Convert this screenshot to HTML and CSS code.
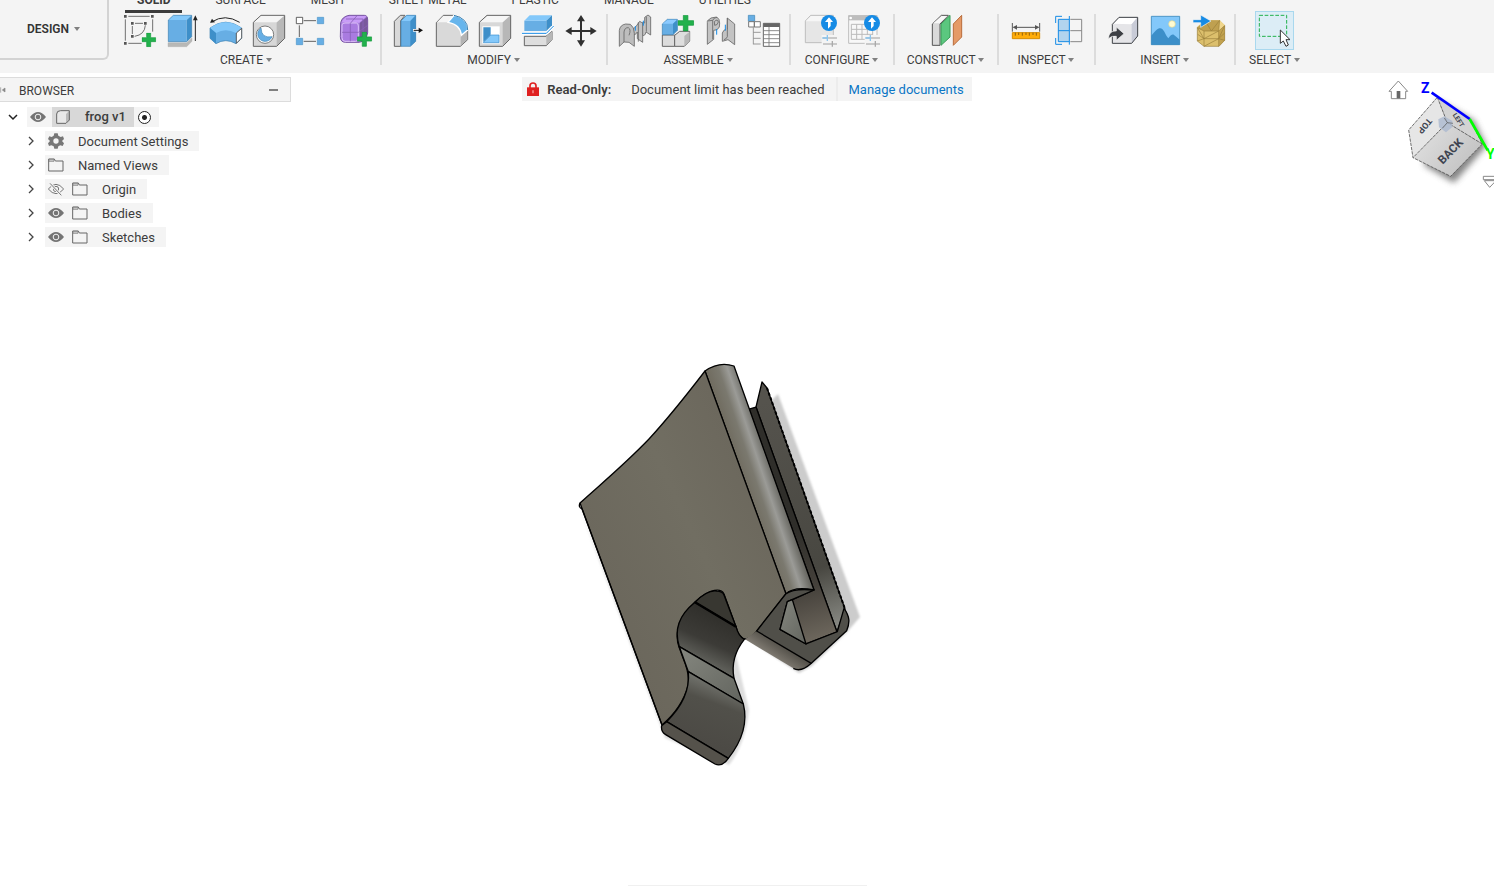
FILE: index.html
```html
<!DOCTYPE html>
<html lang="en">
<head>
<meta charset="utf-8">
<title>frog v1</title>
<link rel="stylesheet" href="styles.css">
</head>
<body>
<svg class="defs" aria-hidden="true">
  <symbol id="eye" viewBox="0 0 48 32"><path d="M0 16Q24-14 48 16Q24 46 0 16Z" fill="#747474"/><circle cx="24" cy="16" r="8.500" fill="none" stroke="#f4f4f4" stroke-width="3"/></symbol>
  <symbol id="eye-off" viewBox="0 0 48 40"><path d="M1 20Q24-8 47 20Q24 48 1 20Z" fill="none" stroke="#777" stroke-width="3"/><circle cx="24" cy="20" r="8" fill="none" stroke="#777" stroke-width="3"/><path d="M6 3L40 39" stroke="#f4f4f4" stroke-width="8"/><path d="M6 3L40 39" stroke="#777" stroke-width="3"/></symbol>
  <symbol id="folder" viewBox="0 0 48 42"><path d="M2 3H19L22 9H45V39H2Z" fill="#f4f4f4" stroke="#666" stroke-width="3"/><path d="M3 4H18V10H3Z" fill="#ccc" stroke="#777" stroke-width="2"/></symbol>
  <symbol id="right" viewBox="0 0 12 12"><path d="M4 2L8 6L4 10" fill="none" stroke="#444" stroke-width="1.300"/></symbol>
  <symbol id="down" viewBox="0 0 12 12"><path d="M2 4L6 8L10 4" fill="none" stroke="#222" stroke-width="1.500"/></symbol>
  <symbol id="plus" viewBox="0 0 44 44"><path d="M15 1H27V15H42V27H27V42H15V27H1V15H15Z" fill="#22b14c" stroke="#159c3e" stroke-width="2"/></symbol>
</svg>

<header class="header">
  <button class="workspace">DESIGN <i class="caret"></i></button>
  <div class="main-bar">
    <nav class="tabs">
      <a class="tab active" href="#">SOLID</a><a class="tab" href="#">SURFACE</a><a class="tab" href="#">MESH</a><a class="tab" href="#">SHEET METAL</a><a class="tab" href="#">PLASTIC</a><a class="tab" href="#">MANAGE</a><a class="tab" href="#">UTILITIES</a>
    </nav>
    <div class="ribbon">
      <section class="group">
        <div class="tools">
          <button class="tool" aria-label="Create sketch"><svg viewBox="357 33 117 117"><path d="M376 58V122M385 49H449M458 58V95M385 130H425" fill="none" stroke="#555" stroke-width="2.500"/><path d="M397 78V102M405 70H429M436 76Q434 104 404 109" fill="none" stroke="#555" stroke-width="2.500"/><path d="M372 45h8v8h-8zM453 45h8v8h-8zM372 126h8v8h-8zM393 66h8v8h-8zM432 66h8v8h-8zM393 105h8v8h-8z" fill="#555"/><use href="#plus" x="425" y="98" width="44" height="44"/></svg></button>
          <button class="tool" aria-label="Extrude"><svg viewBox="486 33 117 117"><path d="M504 128H560L576 114V124L560 140H504Z" fill="#b8b8b6" stroke="#aaa"/><path d="M505 60H560V125H505Z" fill="#67aee4"/><path d="M505 60L520 46H575L560 60Z" fill="#83c8fa"/><path d="M560 60L575 46V110L560 125Z" fill="#3e8fc9"/><path d="M505 60L520 46H575V110L560 125H505Z" fill="none" stroke="#397fb0" stroke-width="2"/><path d="M586 123V55" stroke="#222" stroke-width="3"/><path d="M586 46L593 61H579Z" fill="#222"/></svg></button>
          <button class="tool" aria-label="Revolve"><svg viewBox="615 33 117 117"><path d="M635 66Q675 40 719 67" fill="none" stroke="#222" stroke-width="3"/><path d="M630 68L636 56L645 67Z" fill="#222"/><path d="M630 84Q677 49 725 84V115L708 131Q677 113 648 131L630 115Z" fill="#67aee4" stroke="#397fb0" stroke-width="2"/><path d="M630 84Q677 49 725 84L708 99Q677 82 648 99Z" fill="#83c8fa"/><path d="M630 84L648 99V131L630 115Z" fill="#3e8fc9"/><path d="M709 99L725 85V114L709 130Z" fill="#fff" stroke="#444" stroke-width="2.500"/></svg></button>
          <button class="tool" aria-label="Hole"><svg viewBox="744 33 117 117"><path d="M760 67L783 46H854V115L830 139H760Z" fill="#d7d7d7"/><path d="M830 67L854 46V115L830 139Z" fill="#b8b8b8"/><path d="M760 67L783 46H854L830 67Z" fill="#f5f5f5"/><path d="M760 67L783 46H854V115L830 139H760Z" fill="none" stroke="#656565" stroke-width="3"/><circle cx="795" cy="104" r="26" fill="#fff" stroke="#666" stroke-width="2.500"/><path d="M783 84A22 22 0 1 0 816 110Q784 116 783 84Z" fill="#67aee4" stroke="#4388b7" stroke-width="2"/></svg></button>
          <button class="tool" aria-label="Pattern"><svg viewBox="3 33 117 117"><path d="M28 76V111M41 62H78M41 124H78" stroke="#444" stroke-width="2.500"/><path d="M19 52h19v19h-19z" fill="#fff" stroke="#444" stroke-width="2.500"/><path d="M82 52h19v19h-19zM19 115h19v19h-19zM82 115h19v19h-19z" fill="#67aee4" stroke="#4f96c9" stroke-width="2"/></svg></button>
          <button class="tool" aria-label="Create form"><svg viewBox="129 33 117 117"><path d="M149 68Q153 50 174 46H220Q230 46 230 60V99Q225 123 205 127H164Q148 127 148 110Z" fill="#ab80df" stroke="#7956a2" stroke-width="3"/><path d="M152 67Q160 49 178 48H227L205 68Z" fill="#c89bf7"/><path d="M206 69L229 50V96Q224 116 206 124Z" fill="#79599c"/><path d="M153 75Q153 69 162 69H196Q202 70 202 78V115Q202 124 194 124H162Q153 124 153 113Z" fill="#a97be0" stroke="#dcc1f8" stroke-width="3"/><path d="M178 70V124M153 97H202L230 76M178 70L198 47M165 57H216V112" fill="none" stroke="#8a62b8" stroke-width="2.500"/><use href="#plus" x="198" y="95" width="46" height="46"/></svg></button>
        </div>
        <button class="group-name">CREATE <i class="caret"></i></button>
      </section>
      <section class="group">
        <div class="tools">
          <button class="tool" aria-label="Press pull"><svg viewBox="294 33 117 117"><path d="M313 64L331 46H345L332 62V139H313Z" fill="#d9d9d9" stroke="#656565" stroke-width="3"/><path d="M333 63L350 46H377V124L361 139H333Z" fill="#67aee4"/><path d="M333 63L350 46H377L361 63Z" fill="#83c8fa"/><path d="M361 63L377 46V124L361 139Z" fill="#3e8fc9"/><path d="M333 63L350 46H377V124L361 139H333Z" fill="none" stroke="#397fb0" stroke-width="2"/><path d="M369 91H395" stroke="#fff" stroke-width="8"/><path d="M371 91H390" stroke="#111" stroke-width="3"/><path d="M386 83L399 91L386 99Z" fill="#111"/></svg></button>
          <button class="tool" aria-label="Fillet"><svg viewBox="423 33 117 117"><path d="M439 68L460 46H491Q532 54 533 91V119L511 139H439Z" fill="#d9d9d9" stroke="#656565" stroke-width="3"/><path d="M441 67L460 48H490L474 67Z" fill="#f5f5f5"/><path d="M512 104L532 90V118L512 137Z" fill="#b4b4b4"/><path d="M474 67L492 46Q534 55 533 90L514 106Q512 74 474 67Z" fill="#67b5ec" stroke="#fff" stroke-width="4"/><path d="M492 46Q534 55 533 90" fill="none" stroke="#397fb0" stroke-width="3"/></svg></button>
          <button class="tool" aria-label="Shell"><svg viewBox="552 33 117 117"><path d="M568 67L591 46H662V115L638 139H568Z" fill="#d8d8d8"/><path d="M638 67L662 46V115L638 139Z" fill="#b7b7b7"/><path d="M570 67L592 48H658L638 67Z" fill="#f6f6f6"/><path d="M568 67L591 46H662V115L638 139H568Z" fill="none" stroke="#656565" stroke-width="3"/><path d="M577 79H629V131H577Z" fill="#fff"/><path d="M580 82H602V105L580 127Z" fill="#3e8fc9"/><path d="M580 128L603 105H627V128Z" fill="#83c8fa" stroke="#398ed0" stroke-width="2"/></svg></button>
          <button class="tool" aria-label="Split body"><svg viewBox="681 33 117 117"><path d="M703 109H768L786 94V119L769 137H703Z" fill="#dedede" stroke="#656565" stroke-width="3"/><path d="M769 109L786 94V119L769 136Z" fill="#b7b7b7"/><path d="M703 62H769V93H703Z" fill="#67aee4"/><path d="M703 62L719 46H786L769 62Z" fill="#83c8fa"/><path d="M769 62L786 46V76L769 93Z" fill="#3e8fc9"/><path d="M696 100H769L791 78" fill="none" stroke="#fff" stroke-width="8"/><path d="M696 100H769L791 78" fill="none" stroke="#178be5" stroke-width="3"/></svg></button>
          <button class="tool" aria-label="Move"><svg viewBox="810 33 117 117"><path d="M873 55V130M836 93H910" stroke="#303030" stroke-width="6"/><path d="M873 45L885 64H861ZM873 140L885 121H861ZM826 93L845 81V105ZM920 93L901 81V105Z" fill="#303030"/></svg></button>
        </div>
        <button class="group-name">MODIFY <i class="caret"></i></button>
      </section>
      <section class="group">
        <div class="tools">
          <button class="tool" aria-label="Joint"><svg viewBox="42 33 117 117"><g stroke="#666" stroke-width="2.500" stroke-linejoin="round"><path d="M134 52L144 45L152 51V105L138 96Q134 111 126 105V72Q126 64 134 69Z" fill="#c3c3c3"/><path d="M109 78L119 64L128 69V127L112 116V96Q105 108 99 101V88Z" fill="#c3c3c3"/><path d="M58 91Q60 75 77 72L91 73Q103 81 103 100V139L87 127L72 126L58 139Z" fill="#bdbdbd"/><path d="M72 126V96Q74 82 85 83Q94 88 87 106" fill="none"/><path d="M115 67V125M139 50V95" fill="none"/></g><path d="M106 78V92M130 62V77" stroke="#168be5" stroke-width="3"/></svg></button>
          <button class="tool" aria-label="New component"><svg viewBox="171 33 117 117"><path d="M187 105H224V139H187Z" fill="#dcdcdc" stroke="#656565" stroke-width="3"/><path d="M224 106L239 94H269V123L253 139H224Z" fill="#dedede" stroke="#656565" stroke-width="3"/><path d="M253 108L269 95V123L253 138Z" fill="#b7b7b7"/><path d="M187 72L202 58H232V91L219 104H187Z" fill="#67aee4" stroke="#397fb0" stroke-width="2"/><path d="M188 71L203 59H231L219 71Z" fill="#8bcaff"/><path d="M219 71L232 59V91L219 103Z" fill="#3e8fc9"/><use href="#plus" x="233" y="45" width="50" height="50"/></svg></button>
          <button class="tool" aria-label="As-built joint"><svg viewBox="300 33 117 117"><g fill="#c3c3c3" stroke="#666" stroke-width="2.500" stroke-linejoin="round"><path d="M322 63Q330 51 350 51Q359 56 359 69L358 81Q353 92 341 91V118L322 133Z"/><path d="M322 63L338 61V118M338 61Q342 52 351 52M343 65Q353 55 355 66Q353 76 344 76Z"/><path d="M382 54L404 72V134L384 119L367 124V99Q370 88 382 87Z"/><path d="M382 54V110Q380 117 372 119"/></g><path d="M350 87V104M376 74V92" stroke="#168be5" stroke-width="3"/></svg></button>
          <button class="tool" aria-label="Bill of materials"><svg viewBox="429 33 117 117"><path d="M445 46h19v18h-19z" fill="#67aee4" stroke="#3b83b5" stroke-width="2"/><path d="M446 65h17v16h-17zM463 65h18v16h-18z" fill="#fff" stroke="#777" stroke-width="3"/><path d="M460 82V133M460 97H482M460 115H482M460 132H482" fill="none" stroke="#888" stroke-width="2.500"/><path d="M490 70h49v69h-49z" fill="#fff" stroke="#666" stroke-width="3"/><path d="M490 70h49v11h-49z" fill="#666"/><path d="M507 80V139M490 92H539M490 104H539M490 116H539M490 128H539" stroke="#777" stroke-width="2.500"/></svg></button>
        </div>
        <button class="group-name">ASSEMBLE <i class="caret"></i></button>
      </section>
      <section class="group wide">
        <div class="tools">
          <button class="tool" aria-label="Configure design"><svg viewBox="603 33 117 117"><path d="M616 63L632 46H700V105L678 128H616Z" fill="#e6e6e6" stroke="#bdbdbd" stroke-width="3"/><path d="M617 64L633 48H680L668 64Z" fill="#f6f6f6"/><circle cx="687" cy="69" r="24" fill="#168be5"/><path d="M687 52L699 66H692V78L684 86V66H675Z" fill="#fff"/><path d="M665 105H714V143H665Z" fill="#f4f4f4"/><path d="M668 114H711M669 132H711" stroke="#bbb" stroke-width="4"/><path d="M682 105V123M667 114H684" stroke="#8bc5ee" stroke-width="4"/><path d="M697 123V140" stroke="#aaa" stroke-width="4"/></svg></button>
          <button class="tool" aria-label="Configuration table"><svg viewBox="732 33 117 117"><path d="M746 47h85v83h-85z" fill="#f8f8f8" stroke="#bdbdbd" stroke-width="3"/><path d="M745 46h87v15h-87z" fill="#bdbdbd"/><path d="M754 73H818V118H754ZM754 88H818M754 103H818M770 73V118M786 73V118M802 73V118" fill="none" stroke="#bbb" stroke-width="3"/><circle cx="752" cy="54" r="4" fill="#fff"/><circle cx="816" cy="69" r="24" fill="#168be5"/><path d="M816 52L828 66H821V78L813 86V66H804Z" fill="#fff"/><path d="M794 105H843V143H794Z" fill="#f4f4f4"/><path d="M797 114H840M798 132H840" stroke="#bbb" stroke-width="4"/><path d="M811 105V123M796 114H813" stroke="#8bc5ee" stroke-width="4"/><path d="M826 123V140" stroke="#aaa" stroke-width="4"/></svg></button>
        </div>
        <button class="group-name">CONFIGURE <i class="caret"></i></button>
      </section>
      <section class="group wide">
        <div class="tools">
          <button class="tool" aria-label="Offset plane"><svg viewBox="108 33 117 117"><path d="M127 72L154 46H175L150 72V136H127Z" fill="#d9d9d9" stroke="#555" stroke-width="3"/><path d="M130 70L155 48H172L149 70Z" fill="#f7f7f7"/><path d="M153 72L180 46V111L153 136Z" fill="#5bc77f" stroke="#399a57" stroke-width="3"/><path d="M190 72L215 46V111L190 136Z" fill="#e59a67" stroke="#b96c3b" stroke-width="3"/></svg></button>
        </div>
        <button class="group-name">CONSTRUCT <i class="caret"></i></button>
      </section>
      <section class="group">
        <div class="tools">
          <button class="tool" aria-label="Measure"><svg viewBox="345 33 117 117"><path d="M367 69V95M449 69V95M371 82H445" stroke="#555" stroke-width="3"/><path d="M368 82L381 75V89ZM448 82L435 75V89Z" fill="#555"/><path d="M367 98h82v18h-82z" fill="#ffad0a" stroke="#d68c00" stroke-width="3"/><path d="M376 98v9M386 98v7M397 98v9M408 98v7M418 98v9M429 98v7M439 98v9" stroke="#795210" stroke-width="2.500"/></svg></button>
          <button class="tool" aria-label="Section analysis"><svg viewBox="474 33 117 117"><path d="M505 58H539V125H505Z" fill="#b2d4ee"/><path d="M541 58H575V125H541M541 92H575" fill="none" stroke="#888" stroke-width="3"/><path d="M505 58H538M505 58V125H538M505 92H538M538 48V134M516 49H497V69M497 114V133H516" fill="none" stroke="#168be5" stroke-width="3"/></svg></button>
        </div>
        <button class="group-name">INSPECT <i class="caret"></i></button>
      </section>
      <section class="group">
        <div class="tools">
          <button class="tool" aria-label="Insert derive"><svg viewBox="36 33 117 117"><path d="M67 73L87 52H143V108L125 130H67Z" fill="#e5e5e8"/><path d="M69 71L88 54H140L125 73Z" fill="#fff"/><path d="M125 73L143 52V108L125 130Z" fill="#c8cbd7"/><path d="M67 73L87 52H143V108L125 130H67Z" fill="none" stroke="#3d4045" stroke-width="3"/><path d="M55 116Q57 91 79 93V81L102 101L79 121V109Q65 106 55 116Z" fill="#3d4045" stroke="#f5f5f5" stroke-width="2"/></svg></button>
          <button class="tool" aria-label="Insert image"><svg viewBox="165 33 117 117"><path d="M184 49h85v85h-85z" fill="#83c8fa"/><path d="M184 107C198 91 202 85 210 85C222 85 225 104 235 115C243 104 248 102 252 105Q260 111 269 119V134H184Z" fill="#3c8fc9"/><circle cx="246" cy="72" r="10" fill="#fffbd1" stroke="#e3d78d" stroke-width="2"/><path d="M184 49h85v85h-85z" fill="none" stroke="#3889bd" stroke-width="2.500"/></svg></button>
          <button class="tool" aria-label="Insert mesh"><svg viewBox="294 33 117 117"><path d="M322 80L345 61H389L404 75V121L387 139H342L322 123Z" fill="#dcbf6c"/><path d="M322 83L342 93H386L389 61H345Z" fill="#bfa050"/><path d="M386 93L404 77V121L387 139Z" fill="#c2a24f"/><path d="M389 61L404 76L386 93Z" fill="#f0d68c"/><path d="M322 83L342 93H386L404 77V121L387 139H342L322 123ZM345 61L364 93L389 61L386 93M342 93V139M386 93V139M323 103L342 116H386L404 99M342 116L386 93M342 139L386 116M322 83L342 116L322 123M404 77L386 116L404 121" fill="none" stroke="#9a7f3a" stroke-width="2"/><path d="M309 59H332V45L363 63L332 82V68H309Z" fill="#168be5" stroke="#f4f4f4" stroke-width="2"/></svg></button>
        </div>
        <button class="group-name">INSERT <i class="caret"></i></button>
      </section>
      <section class="group last">
        <div class="tools">
          <button class="tool selected" aria-label="Select"><svg viewBox="495 33 117 117"><path d="M508 46H590V109H508Z" fill="none" stroke="#22b14c" stroke-width="3" stroke-dasharray="11 5"/><path d="M571 90V130L580 123L588 139L595 135L588 119H600Z" fill="#fff" stroke="#333" stroke-width="3"/></svg></button>
        </div>
        <button class="group-name">SELECT <i class="caret"></i></button>
      </section>
    </div>
  </div>
</header>

<main class="workspace-area">
  <svg class="model" viewBox="0 73 1494 813" role="img" aria-label="frog v1 model">
    <defs>
      <linearGradient id="face" gradientUnits="userSpaceOnUse" x1="600" y1="600" x2="770" y2="520"><stop offset="0" stop-color="#6b675c"/><stop offset=".6" stop-color="#716e62"/><stop offset="1" stop-color="#6c685d"/></linearGradient>
      <linearGradient id="round" gradientUnits="userSpaceOnUse" x1="744" y1="480" x2="774" y2="470"><stop offset="0" stop-color="#716d61"/><stop offset=".35" stop-color="#7b796f"/><stop offset=".62" stop-color="#9b9b97"/><stop offset="1" stop-color="#62615b"/></linearGradient>
      <linearGradient id="slot" gradientUnits="userSpaceOnUse" x1="790" y1="530" x2="822" y2="636"><stop offset="0" stop-color="#2f2e2a"/><stop offset=".55" stop-color="#45413b"/><stop offset="1" stop-color="#6b655b"/></linearGradient>
      <linearGradient id="rail" gradientUnits="userSpaceOnUse" x1="770" y1="400" x2="848" y2="620"><stop offset="0" stop-color="#55534d"/><stop offset=".75" stop-color="#484741"/><stop offset="1" stop-color="#858680"/></linearGradient>
      <linearGradient id="bore" gradientUnits="userSpaceOnUse" x1="215" y1="170" x2="150" y2="310"><stop offset="0" stop-color="#302f2b"/><stop offset=".55" stop-color="#3c3b37"/><stop offset="1" stop-color="#656660"/></linearGradient>
      <linearGradient id="band" x1="0" y1="0" x2="1" y2="1"><stop offset="0" stop-color="#85877f"/><stop offset="1" stop-color="#62645e"/></linearGradient>
      <linearGradient id="leg" gradientUnits="userSpaceOnUse" x1="205" y1="380" x2="145" y2="540"><stop offset="0" stop-color="#6d6e68"/><stop offset=".3" stop-color="#51504a"/><stop offset="1" stop-color="#4c4a45"/></linearGradient>
      <linearGradient id="under" gradientUnits="userSpaceOnUse" x1="400" y1="255" x2="370" y2="300"><stop offset="0" stop-color="#514e47"/><stop offset="1" stop-color="#858077"/></linearGradient>
      <filter id="soft" x="-20%" y="-20%" width="140%" height="140%"><feGaussianBlur stdDeviation="1"/></filter>
    </defs>
    <path d="M778 394L860 617L847 632L812 666L799 673L755 644L770 402Z" fill="#ccc" filter="url(#soft)"/>
    <path d="M736 655L749 710Q745 745 729 765L665 738L579 506L664 720Z" fill="#ddd" filter="url(#soft)"/>
    <g stroke="#000" stroke-width="1.300" stroke-linejoin="round">
      <path d="M756 407L762 382L767 388L845 609L837 632Z" fill="url(#rail)"/>
      <path d="M749 409L756 407L837 632L805 644L792 600L814 590Z" fill="url(#slot)"/>
      <path d="M705 371Q719 361 734 366L814 590Q794 586 786 594Z" fill="url(#round)"/>
      <path d="M705 371Q672 414 649 439C624 465 602 483 580 503L662 725Q682 708 688 686Q690 674 683 658L679 647C673 630 682 615 695 602C711 588 721 588 724 594L736 627Q739 639 746 639Q751 638 757 631L786 594Z" fill="url(#face)"/>
      <path d="M580 503Q578 507 582 509L662 725" fill="none"/>
      <path d="M767 388L845 609" fill="none" stroke-width="2" stroke-dasharray="3 2"/>
    </g>
    <g transform="translate(650 560) scale(.33333)" stroke="#000" stroke-width="4" stroke-linejoin="round">
      <path d="M285 238L320 213L484 310L460 326Q447 333 430 325Z" fill="url(#under)" stroke="none"/>
      <path d="M320 213L407 102Q430 84 492 90L412 125L390 208L468 252L562 215L582 145C600 170 600 188 590 212L484 310Z" fill="#504f49"/>
      <path d="M484 310Q453 338 430 325" fill="none"/>
      <path d="M412 125L427 119L468 252L390 208Z" fill="url(#band)"/>
      <path d="M135 127Q170 90 200 93Q218 94 222 105L258 200Z" fill="#383731"/>
      <path d="M135 127L258 200Q266 230 283 238Q240 292 252 355L88 260C68 200 95 159 135 127Z" fill="url(#bore)"/>
      <path d="M135 127L258 200" fill="none" stroke-width="7"/>
      <path d="M88 260L252 355L280 432L115 335Z" fill="url(#band)"/>
      <path d="M115 335L280 432Q300 513 235 595L50 485Q122 415 115 335Z" fill="url(#leg)"/>
      <path d="M50 485L235 595Q216 622 195 612L47 524Q32 515 35 497Z" fill="#55524b"/>
    </g>
  </svg>

  <aside class="browser">
    <div class="browser-head"><svg class="collapse" viewBox="0 0 18 18"><path d="M2 1V17M15 3V15L7 9Z" fill="#888" stroke="#888" stroke-width="2"/></svg><h2>BROWSER</h2><button class="minimize" aria-label="Minimize"></button></div>
    <ul class="tree">
      <li class="row root"><button class="toggle" aria-label="Collapse frog v1"><svg viewBox="0 0 12 12"><use href="#down"/></svg></button><div class="item"><svg class="ico"><use href="#eye"/></svg><span class="name"><svg class="body-ico" viewBox="0 0 42 42"><path d="M2 12L12 2H40V30L30 40H2Z" fill="#e8e8e8"/><path d="M30 12L40 2V30L30 40Z" fill="#bbb"/><path d="M2 12Q2 2 14 2H40V30L30 40H2Z" fill="none" stroke="#666" stroke-width="3"/></svg>frog v1</span><input class="radio" type="radio" checked aria-label="Activate frog v1"></div></li>
      <li class="row"><button class="toggle" aria-label="Expand Document Settings"><svg viewBox="0 0 12 12"><use href="#right"/></svg></button><div class="item"><svg class="ico" viewBox="0 0 48 48"><path d="M19 1H29L31 8L38 12L45 10L48 18L42 24L48 31L44 39L37 37L31 40L29 47H19L17 40L10 37L3 39L0 31L6 24L0 18L4 10L11 12L17 8Z" fill="#777"/><circle cx="24" cy="24" r="8" fill="#f4f4f4"/></svg><span>Document Settings</span></div></li>
      <li class="row"><button class="toggle" aria-label="Expand Named Views"><svg viewBox="0 0 12 12"><use href="#right"/></svg></button><div class="item"><svg class="ico"><use href="#folder"/></svg><span>Named Views</span></div></li>
      <li class="row"><button class="toggle" aria-label="Expand Origin"><svg viewBox="0 0 12 12"><use href="#right"/></svg></button><div class="item"><svg class="ico"><use href="#eye-off"/></svg><svg class="ico second"><use href="#folder"/></svg><span>Origin</span></div></li>
      <li class="row"><button class="toggle" aria-label="Expand Bodies"><svg viewBox="0 0 12 12"><use href="#right"/></svg></button><div class="item"><svg class="ico"><use href="#eye"/></svg><svg class="ico second"><use href="#folder"/></svg><span>Bodies</span></div></li>
      <li class="row"><button class="toggle" aria-label="Expand Sketches"><svg viewBox="0 0 12 12"><use href="#right"/></svg></button><div class="item"><svg class="ico"><use href="#eye"/></svg><svg class="ico second"><use href="#folder"/></svg><span>Sketches</span></div></li>
    </ul>
  </aside>

  <div class="notice"><svg class="lock" viewBox="0 0 36 42"><path d="M9 18V11Q9 3 18 3Q27 3 27 11V18" fill="none" stroke="#df2020" stroke-width="5"/><path d="M0 16H36V42H0Z" fill="#df2020"/><path d="M16 25H20V34H16Z" fill="#f6a0a0"/></svg><strong>Read-Only:</strong><span class="message">Document limit has been reached</span><a href="#">Manage documents</a></div>

  <svg class="cube" viewBox="0 3 360 387" role="img" aria-label="View orientation">
    <defs><filter id="cube-blur" x="-30%" y="-30%" width="160%" height="160%"><feGaussianBlur stdDeviation="9"/></filter><linearGradient id="back" x1="0" y1="0" x2="1" y2=".6"><stop offset="0" stop-color="#e4e4e4"/><stop offset="1" stop-color="#c2c2c2"/></linearGradient></defs>
    <path d="M190 85L300 145L337 222L240 332L150 280Z" fill="#666" opacity=".8" filter="url(#cube-blur)"/>
    <path d="M190 76L104 174L117 257L220 152Z" fill="#e6e6e6"/><path d="M220 152L325 216L230 313L117 257Z" fill="url(#back)"/><path d="M190 76L287 141L325 216L220 152Z" fill="#d3d3d3"/>
    <path d="M190 76L104 174L117 257L230 313L325 216L287 141M190 76L220 152L325 216M220 152L117 257" fill="none" stroke="#555" stroke-width="2.500" stroke-dasharray="10 3"/>
    <path d="M193 142L211 133L235 147V165L216 181L195 166Z" fill="#aebbd0" opacity=".85"/><path d="M220 152L211 138M220 152L237 154M220 152L205 169" stroke="#555" stroke-width="2"/>
    <text class="cube-text" font-size="35" transform="translate(238 246) rotate(-46)" text-anchor="middle">BACK</text>
    <text class="cube-text" font-size="26" transform="translate(146 156) rotate(130)" text-anchor="middle">TOP</text>
    <text class="cube-text" font-size="20" transform="translate(248 148) rotate(56)" text-anchor="middle">LEFT</text>
    <path d="M173 62L287 141" stroke="#00f" stroke-width="8"/><path d="M287 141L341 235" stroke="#0f0" stroke-width="8"/>
    <text class="axis" x="141" y="62" fill="#0000ff">Z</text><text class="axis" x="336" y="262" fill="#00ff00">Y</text>
    <path d="M45 58L73 27L101 58H95V80H52V58Z" fill="#fff" stroke="#888" stroke-width="3"/><path d="M68 57H79V79H68Z" fill="#666"/>
    <path d="M328 313H366V323H328ZM331 326H366L347 346Z" fill="#fff" stroke="#888" stroke-width="3"/>
  </svg>
  <div class="nav-bar"></div>
</main>
</body>
</html>
```
FILE: styles.css
```css
* { box-sizing: border-box; }
body {
  margin: 0;
  min-height: 100vh;
  display: flex;
  flex-direction: column;
  overflow: hidden;
  background: #fff;
  color: #3c3c3c;
  font: 13px/16px Roboto, "Noto Sans", sans-serif;
}
button { border: 0; padding: 0; background: none; color: inherit; font: inherit; }
svg { display: block; }
a { text-decoration: none; color: inherit; }
.defs { position: absolute; width: 0; height: 0; }

.header { display: flex; overflow: hidden; background: #f4f4f4; padding-bottom: 4px; font-size: 12px; }
.workspace {
  flex: none;
  width: 109px;
  height: 60px;
  border: 2px solid #d3d3d3;
  border-width: 0 2px 2px 0;
  border-radius: 0 0 6px 0;
  font-weight: 600;
  color: #333;
}
.caret {
  display: inline-block;
  vertical-align: 2px;
  border: 3px solid transparent;
  border-top: 4px solid #808080;
  border-bottom: 0;
}
.workspace .caret { margin-left: 2px; }
.main-bar { flex: 1; min-width: 0; padding-left: 4px; }
.tabs { display: flex; align-items: flex-end; gap: 21px; height: 13px; padding-left: 12px; }
.tab { flex: none; padding: 0 12px 2px; border-bottom: 3px solid transparent; }
.tab.active { border-color: #3c3c3c; font-weight: 700; }
.ribbon { display: flex; margin-top: -2px; }
.group {
  position: relative;
  flex: none;
  display: flex;
  flex-direction: column;
  align-items: center;
  padding: 0 7px 0 4px;
}
.group::after {
  content: "";
  position: absolute;
  right: 0;
  top: 3px;
  bottom: 4px;
  width: 2px;
  background: #dcdcdc;
}
.group.wide { min-width: 104px; }
.group.last { min-width: 80px; }
.group.last::after { display: none; }
.tools { display: flex; gap: 4px; padding: 0 2px; }
.tool { width: 39px; height: 39px; }
.tool svg { width: 39px; height: 39px; }
.tool.selected { background: #dcedf6; box-shadow: inset 0 0 0 1px #a9d8ee; }
.group-name { height: 19px; white-space: nowrap; }

.workspace-area {
  position: relative;
  flex: 1;
  display: grid;
  grid-template-columns: 1fr auto 1fr;
  align-items: start;
}
.model { position: absolute; inset: 0; width: 100%; height: 100%; }
.browser { position: relative; margin-top: 4px; width: 291px; }
.browser-head {
  display: flex;
  align-items: center;
  height: 25px;
  padding-right: 12px;
  background: #f4f4f4;
  border: 1px solid #dcdcdc;
  border-left: 0;
}
.collapse { width: 6px; height: 6px; }
.browser-head h2 { flex: 1; margin: 0 0 0 13px; padding-top: 2px; font: inherit; font-size: 12px; }
.minimize { width: 9px; height: 2px; background: #808080; }
.tree { list-style: none; margin: 5px 0 0; padding: 0; display: grid; gap: 4px; }
.row { display: flex; align-items: center; height: 20px; padding-left: 23px; }
.row.root { padding-left: 5px; }
.toggle { width: 16px; margin-right: 6px; }
.toggle svg { width: 12px; height: 12px; margin: 0 auto; }
.item { display: flex; align-items: center; height: 20px; padding: 0 11px 0 3px; background: #f4f4f4; }
.item > span { padding: 2px 0 0 14px; }
.ico { width: 16px; height: 16px; }
.second { margin-left: 8px; }
.root .item { padding-right: 8px; }
.root .name {
  display: flex;
  align-items: center;
  height: 20px;
  margin-left: 6px;
  padding: 0 8px 0 4px;
  background: #d8d8d8;
  font-weight: 500;
}
.body-ico { width: 14px; height: 14px; margin-right: 15px; }
.radio {
  appearance: none;
  width: 13px;
  height: 13px;
  margin: 0 0 0 4px;
  border: 1px solid #222;
  border-radius: 50%;
  background: radial-gradient(#222 0 2px, #fff 3px);
}

.notice {
  position: relative;
  display: flex;
  align-items: center;
  height: 24px;
  margin-top: 4px;
  padding-left: 5px;
  background: #f4f4f4;
  white-space: nowrap;
}
.lock { width: 12px; height: 14px; margin-right: 8px; }
.notice strong { padding-top: 2px; font-weight: 600; }
.message { padding: 2px 11px 0 20px; }
.notice a {
  height: 24px;
  padding: 1px 8px 0 11px;
  border-left: 2px solid #ececec;
  line-height: 24px;
  color: #0b76c5;
}
.cube { position: relative; justify-self: end; width: 120px; height: 129px; }
.cube-text { font-family: Roboto, sans-serif; font-weight: 700; fill: #3e4450; }
.axis { font: 700 42px Roboto, sans-serif; }
.nav-bar {
  position: absolute;
  left: 50%;
  bottom: 0;
  width: 239px;
  height: 1px;
  margin-left: -119px;
  background: #f0f0f0;
}
```
